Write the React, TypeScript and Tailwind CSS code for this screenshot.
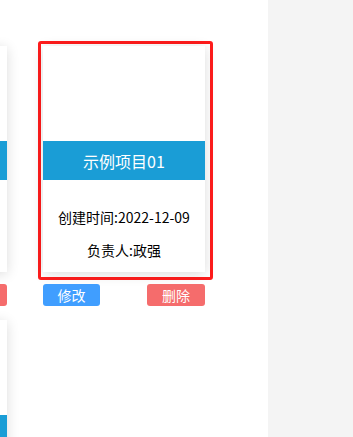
import React from 'react';

interface Project {
    id: number;
    title: string;
    createdAt: string;
    owner: string;
    selected?: boolean;
}

const projects: Project[] = [
    { id: 1, title: '示例项目00', createdAt: '2022-12-08', owner: '政强' },
    { id: 2, title: '示例项目01', createdAt: '2022-12-09', owner: '政强', selected: true },
    { id: 3, title: '示例项目02', createdAt: '2022-12-10', owner: '政强' },
];

function ProjectCard({ project }: { project: Project }) {
    return (
        <div className="mb-[9px]">
            {/* 选中边框 */}
            <div
                className={`w-[175px] rounded-[3px] border-[3px] pt-[2px] pb-[5px] pl-[2px] pr-[5px] ${
                    project.selected ? 'border-[#ff1c1c]' : 'border-transparent'
                }`}
            >
                <div className="h-[226px] bg-white shadow-[0_2px_12px_0_rgba(0,0,0,0.14)] flex flex-col">
                    <div className="h-[95px]" />
                    <div className="h-[39px] bg-[#1a9dd6] flex items-center justify-center text-white text-[16px]">
                        {project.title}
                    </div>
                    <div className="flex-1 flex flex-col items-center pt-[28px] gap-[15px] text-[14px] text-black">
                        <p className="leading-[18px]">创建时间:{project.createdAt}</p>
                        <p className="leading-[18px]">负责人:{project.owner}</p>
                    </div>
                </div>
            </div>

            {/* 操作按钮 */}
            <div className="flex justify-between pl-[5px] pr-[8px] mt-[4px]">
                <button className="w-[57px] h-[22px] rounded-[3px] bg-[#409eff] text-white text-[14px] leading-none">
                    修改
                </button>
                <button className="w-[58px] h-[22px] rounded-[3px] bg-[#f56c6c] text-white text-[14px] leading-none">
                    删除
                </button>
            </div>
        </div>
    );
}

export default function App() {
    return (
        <div
            className="flex w-[353px] h-[437px] overflow-hidden bg-white"
            style={{ fontFamily: '"Microsoft YaHei", "Noto Sans CJK SC", sans-serif' }}
        >
            <div className="w-[268px] h-full overflow-hidden bg-white">
                <div className="ml-[-160px] mt-[41px] grid grid-cols-[175px_175px] gap-x-[23px]">
                    {projects.map((p) => (
                        <ProjectCard key={p.id} project={p} />
                    ))}
                </div>
            </div>
            <div className="flex-1 h-full bg-[#f4f4f4]" />
        </div>
    );
}
